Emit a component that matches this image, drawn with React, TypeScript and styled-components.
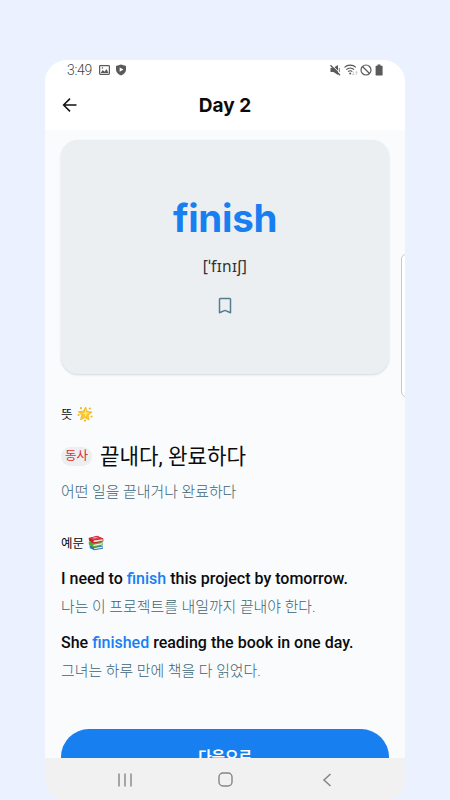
import React from 'react';
import styled, { createGlobalStyle } from 'styled-components';

const GlobalStyle = createGlobalStyle`
  * { box-sizing: border-box; }
  body { margin: 0; background: #ebf1fe; overflow: hidden; }
`;

const Page = styled.div`
  height: 800px;
  padding: 60px 45px 0;
  overflow: hidden;
  background: #ebf1fe;
  font-family: Roboto, 'Noto Sans CJK KR', sans-serif;
  color: #0b0b0c;
`;

const Phone = styled.div`
  position: relative;
  display: flex;
  flex-direction: column;
  height: 741px;
  border-radius: 22px;
  overflow: hidden;
  background: #f9fbfd;
`;

const StatusBar = styled.div`
  display: flex;
  align-items: center;
  justify-content: space-between;
  flex: none;
  height: 20px;
  padding: 0 21px 0 22px;
  background: #fff;
  color: #444;
`;

const StatusGroup = styled.div<{ $gap: number }>`
  display: flex;
  align-items: center;
  gap: ${(p) => p.$gap}px;
`;

const Clock = styled.span`
  width: 27px;
  font-size: 14px;
  font-weight: 300;
  line-height: 20px;
  letter-spacing: -0.3px;
  white-space: nowrap;
`;

const AppBar = styled.header`
  display: grid;
  grid-template-columns: 50px 1fr 50px;
  align-items: center;
  flex: none;
  height: 50px;
  background: #fff;
`;

const BackButton = styled.button`
  display: flex;
  justify-content: center;
  padding: 0;
  border: 0;
  background: none;
  color: #111;
`;

const Title = styled.h1`
  margin: 0;
  padding-top: 1px;
  text-align: center;
  font: 700 19px/25px Inter, sans-serif;
`;

const Content = styled.main`
  flex: 1;
  min-height: 0;
  padding: 10px 16px 0;
  overflow: hidden;
`;

const WordCard = styled.section`
  display: flex;
  flex-direction: column;
  align-items: center;
  height: 234px;
  padding-top: 54px;
  border-radius: 17px;
  background: #ebeff2;
  box-shadow: 0 1px 2px rgba(70, 100, 110, 0.22);
`;

const Word = styled.div`
  font: 700 38.5px/48px Inter, sans-serif;
  letter-spacing: -0.3px;
  color: #187ff1;
`;

const Phonetic = styled.div`
  margin: 12px 0 19px;
  font: 400 15.5px/24px 'Noto Sans', sans-serif;
  letter-spacing: 0.35px;
  color: #303234;
`;

const SectionTitle = styled.h2<{ $top: number }>`
  display: flex;
  align-items: center;
  gap: 4px;
  height: 20px;
  margin: ${(p) => p.$top}px 0 0;
  font-size: 12.5px;
  font-weight: 400;
  line-height: 20px;

  svg { margin-bottom: 2px; }
`;

const MeaningRow = styled.div`
  display: flex;
  align-items: center;
  gap: 8px;
  height: 32px;
  margin-top: 16px;
`;

const Tag = styled.span`
  width: 31px;
  height: 19px;
  margin-bottom: 2px;
  border-radius: 10px;
  background: #ebeff2;
  color: #e32b2b;
  text-align: center;
  font-size: 12.5px;
  line-height: 18px;
`;

const Meaning = styled.span`
  font-size: 21.2px;
  line-height: 32px;
  white-space: nowrap;
`;

const Note = styled.p<{ $top: number }>`
  margin: ${(p) => p.$top}px 0 0;
  font-size: 14.9px;
  line-height: 22px;
  font-weight: 300;
  color: #3c6475;
  white-space: nowrap;
`;

const Sentence = styled.p<{ $top: number }>`
  margin: ${(p) => p.$top}px 0 0;
  font-size: 16px;
  line-height: 22px;
  font-weight: 500;
  white-space: nowrap;
`;

const Highlight = styled.span`
  color: #187ff1;
`;

const NextButton = styled.button`
  display: block;
  width: 100%;
  height: 56px;
  margin-top: 47px;
  padding: 0;
  border: 0;
  border-radius: 28px;
  background: #187ff1;
  color: #fff;
  font: 700 14.6px/56px Roboto, 'Noto Sans CJK KR', sans-serif;
`;

const NavBar = styled.nav`
  display: flex;
  justify-content: space-around;
  align-items: center;
  flex: none;
  height: 43px;
  padding: 0 28px 0 30px;
  background: #f1f1f1;
`;

const EdgeHandle = styled.div`
  position: absolute;
  top: 194px;
  right: -6px;
  width: 10px;
  height: 143px;
  border: 1px solid #c6c8c9;
  border-radius: 5px;
  background: #fff;
`;

const StarIcon = () => (
  <svg width="16" height="16" viewBox="0 0 16 16">
    <path d="M8.6 1 10.100 5.400l5 .7-3.900 3.200.9 4.700-4.200-2.400-4.300 2.200 1.100-4.700L1.300 5.700l5-.4z" fill="#fcc72d" stroke="#f0b41c" strokeWidth=".8" strokeLinejoin="round" />
    <path d="m8.500 2.800.8 3.400 3.200.5-3 1.600-.7 2.600-1.200-2.600-3.300-1 3.200-.4z" fill="#ffe87a" />
    <g fill="#efb91d">
      <circle cx="4" cy="2.200" r="1.100" /><circle cx="12.800" cy="2.600" r="1.100" /><circle cx="1.600" cy="9" r="1.100" />
      <circle cx="14.500" cy="10.500" r="1.100" /><circle cx="8" cy="14.600" r="1.100" />
    </g>
  </svg>
);

const BooksIcon = () => (
  <svg width="16" height="16" viewBox="0 0 16 16">
    <path d="m1.500 10.700 9.700-.9 3.700 1.400v2.500L6.200 15.300 2 13.300z" fill="#2576ba" />
    <path d="m6.200 12.900 8.300-1.400v1.200l-8.300 1.500z" fill="#e9eff1" />
    <path d="m.7 6.700 10-.8 4.200 1.800-.3 2.700-9.200 2L1 9.900z" fill="#5fa32d" />
    <path d="m5.400 9.700 8.900-1.600-.1 1.400-8.800 1.700z" fill="#e5eee0" />
    <path d="m.6 3 8.500-2.300 6.200 2.700v3.100L5.400 8.400 1.200 6z" fill="#c91f30" />
    <path d="m1.300 3 7.800-1.700 5.400 2.200-9 1.500z" fill="#e13844" />
    <path d="m5.600 5.600 9-1.400v1.500l-9 1.600z" fill="#f2e7e5" />
    <path d="m4 3 4-.9 2.100.7-4 .8z" fill="#efb5a9" />
  </svg>
);

export default function App() {
  return (
    <>
      <GlobalStyle />
      <Page>
        <Phone>
          <StatusBar>
            <StatusGroup $gap={5}>
              <Clock>3:49</Clock>
              <svg width="11" height="10" viewBox="0 0 11 10">
                <rect x=".6" y=".6" width="9.8" height="8.8" rx=".8" fill="none" stroke="#5a5a5a" strokeWidth="1.2" />
                <path d="m1.5 8 2.3-3L5.5 6.7 7.5 4l2 4z" fill="#5a5a5a" /><circle cx="3.4" cy="3" r=".8" fill="#5a5a5a" />
              </svg>
              <svg width="12" height="12" viewBox="0 0 12 12">
                <path d="M6 .4 11 2v3.6c0 2.7-2 4.9-5 6-3-1.100-5-3.300-5-6V2z" fill="#5a5a5a" />
                <path d="M4.700 3.500v4.200L8.500 5.600z" fill="#fff" />
              </svg>
            </StatusGroup>
            <StatusGroup $gap={2}>
              <svg width="12" height="12" viewBox="0 0 12 12">
                <path d="M1.500 4H4l5-3v10L4.500 8h-3z" fill="#5a5a5a" />
                <path d="M10.300 4v4" stroke="#5a5a5a" strokeWidth=".8" />
                <path d="m2.700.7 9 9.400" stroke="#fff" strokeWidth="1" />
                <path d="m1.500 1.200 9.500 10" stroke="#5a5a5a" strokeWidth="1.300" />
              </svg>
              <svg width="15" height="12" viewBox="0 0 15 12" fill="none" stroke="#555">
                <path d="M1.500 3.400c3.200-3 8.200-3 11.400 0M3.300 5.600c2.200-2 5.600-2 7.800 0M5.100 7.700c1.300-1.200 2.900-1.200 4.200 0" strokeWidth="1.100" />
                <circle cx="7.200" cy="9.600" r="1" fill="#555" stroke="none" />
                <path d="M10.300 7.500v3.600m-1.200-1.200 1.200 1.200 1.200-1.200M13.400 11V7.400M12.200 8.600l1.200-1.200 1.200 1.200" stroke="#c5c5c5" strokeWidth=".8" />
              </svg>
              <svg width="12" height="12" viewBox="0 0 12 12" fill="none" stroke="#5a5a5a" strokeWidth="1.200">
                <circle cx="6" cy="6" r="5" /><path d="m2.500 2.500 7 7" />
              </svg>
              <svg width="10" height="12" viewBox="0 0 10 12" fill="#5a5a5a">
                <path d="M3.500.5h3v1.200H8a.6.6 0 0 1 .6.600v8.600a.6.6 0 0 1-.6.600H2.200a.6.6 0 0 1-.6-.6V2.300a.6.6 0 0 1 .6-.6h1.300z" />
              </svg>
            </StatusGroup>
          </StatusBar>
          <AppBar>
            <BackButton aria-label="Back">
              <svg width="16" height="16" viewBox="0 0 16 16" fill="none" stroke="currentColor" strokeWidth="1.500">
                <path d="M14.500 8H2M8 1.600 1.600 8 8 14.400" />
              </svg>
            </BackButton>
            <Title>Day 2</Title>
          </AppBar>
          <Content>
            <WordCard>
              <Word>finish</Word>
              <Phonetic>[ˈfɪnɪʃ]</Phonetic>
              <svg width="14" height="17" viewBox="0 0 14 17" fill="none" stroke="#567d8e" strokeWidth="1.500" strokeLinejoin="round">
                <path d="M1.500 2.200a.7.7 0 0 1 .7-.7h9.600a.7.7 0 0 1 .7.700V15.700L7 13.400l-5.500 2.300z" />
              </svg>
            </WordCard>
            <SectionTitle $top={31}>뜻 <StarIcon /></SectionTitle>
            <MeaningRow>
              <Tag>동사</Tag>
              <Meaning>끝내다, 완료하다</Meaning>
            </MeaningRow>
            <Note $top={8}>어떤 일을 끝내거나 완료하다</Note>
            <SectionTitle $top={31}>예문 <BooksIcon /></SectionTitle>
            <Sentence $top={14}>I need to <Highlight>finish</Highlight> this project by tomorrow.</Sentence>
            <Note $top={6}>나는 이 프로젝트를 내일까지 끝내야 한다.</Note>
            <Sentence $top={14}>She <Highlight>finished</Highlight> reading the book in one day.</Sentence>
            <Note $top={6}>그녀는 하루 만에 책을 다 읽었다.</Note>
            <NextButton>다음으로</NextButton>
          </Content>
          <NavBar>
            <svg width="14" height="14" viewBox="0 0 14 14" stroke="#858585" strokeWidth="1.400"><path d="M1 .5v13M7 .5v13M13 .5v13" /></svg>
            <svg width="15" height="15" viewBox="0 0 15 15" fill="none" stroke="#858585" strokeWidth="1.400"><rect x="1" y="1" width="13" height="13" rx="4" /></svg>
            <svg width="14" height="14" viewBox="0 0 14 14" fill="none" stroke="#858585" strokeWidth="1.500"><path d="M10.500 1 4 7l6.500 6" /></svg>
          </NavBar>
          <EdgeHandle />
        </Phone>
      </Page>
    </>
  );
}
